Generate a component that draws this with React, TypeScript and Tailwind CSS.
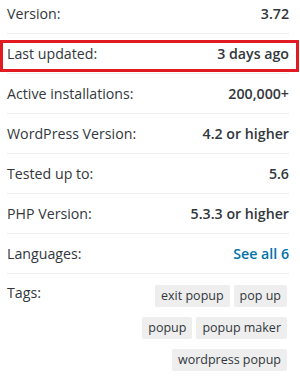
const rows: { label: string; value: string; link?: boolean; highlight?: boolean }[] = [
  { label: "Version:", value: "3.72" },
  { label: "Last updated:", value: "3 days ago", highlight: true },
  { label: "Active installations:", value: "200,000+" },
  { label: "WordPress Version:", value: "4.2 or higher" },
  { label: "Tested up to:", value: "5.6" },
  { label: "PHP Version:", value: "5.3.3 or higher" },
  { label: "Languages:", value: "See all 6", link: true },
]

const tags = ["exit popup", "pop up", "popup", "popup maker", "wordpress popup"]

export default function App() {
  return (
    <div
      className="h-[383px] w-[300px] overflow-hidden bg-white text-[#32373c]"
      style={{ fontFamily: '"Open Sans", sans-serif' }}
    >
      <ul className="-mt-[6px] pl-[7px] pr-[11px]">
        {rows.map((row) => (
          <li
            key={row.label}
            className="relative flex items-center justify-between border-b border-[#eeeeee] py-[10px] text-[14.2px] leading-[19px]"
          >
            <span>{row.label}</span>
            {row.link ? (
              <a className="font-semibold text-[#0073aa]">{row.value}</a>
            ) : (
              <strong className="font-semibold">{row.value}</strong>
            )}
            {row.highlight && (
              <div className="absolute -left-[7px] -right-[10px] top-[6px] bottom-[1px] border-[3px] border-[#e21b23]"></div>
            )}
          </li>
        ))}
        <li className="flex justify-between pt-[9px] text-[14.2px] leading-[19px]">
          <span>Tags:</span>
          <div className="mr-[2px] flex w-[150px] flex-wrap justify-end gap-x-[4px] gap-y-[10px] pt-[2px]">
            {tags.map((tag) => (
              <a
                key={tag}
                className="rounded-[2px] bg-[#eeeeee] px-[6px] py-[2px] text-[12.5px] leading-[18px]"
              >
                {tag}
              </a>
            ))}
          </div>
        </li>
      </ul>
    </div>
  )
}
